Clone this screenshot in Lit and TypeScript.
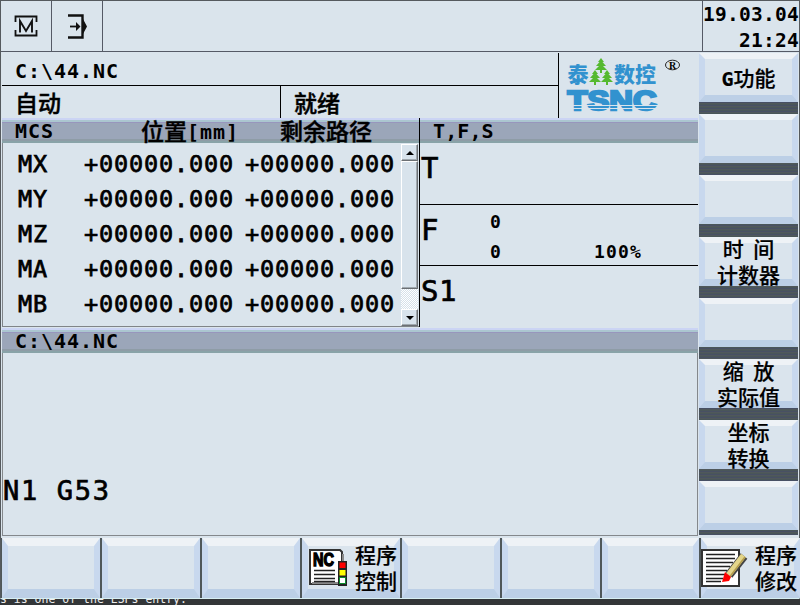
import { LitElement, html, css, svg, nothing } from "lit";
import { customElement, property } from "lit/decorators.js";

@customElement("soft-key")
class SoftKey extends LitElement {
  @property({ type: Array }) lines: string[] = [];
  @property() icon = "";

  static styles = css`
    :host {
      display: flex;
      align-items: center;
      justify-content: center;
      box-sizing: border-box;
      min-height: 0;
      background: #dae4ed;
      border-style: solid;
      border-width: 6px 6px 7px 6px;
      border-color: #eef2f6 #c8d8ee #bccfe6 #c8d8ee;
      color: #000;
      overflow: visible;
    }
    .icon { flex: none; display: block; margin-right: 7px; margin-top: 1px; }
    .label {
      flex: none;
      display: flex;
      flex-direction: column;
      text-align: center;
      white-space: pre;
      font: 500 21px/26px "Noto Sans CJK SC", sans-serif;
      -webkit-text-stroke: 0.2px #000;
    }
    :host(.bottom) { border-width: 8px 6px 9px 6px; justify-content: flex-end; }
    :host(.bottom) .label { margin: -2px -3px 0 0; }
    .latin { font-family: "DejaVu Sans Mono", monospace; font-weight: 700; font-size: 20px; }
    .single { margin-top: 1px; }
  `;

  private picture() {
    if (this.icon === "nc")
      return html`<svg class="icon" width="39" height="38" viewBox="0 0 39 38">
        <path d="M1 1H31L33 3V35H1Z" fill="#fff" stroke="#333" stroke-width="2" />
        <path d="M3 34H34M34 5V12" stroke="#888" stroke-width="2" />
        <text x="4" y="17" font-family="Liberation Sans" font-weight="700" font-size="18" stroke="#000" stroke-width="1.4" textLength="21" lengthAdjust="spacingAndGlyphs">NC</text>
        <path d="M5 21.5H26M5 25.5H26M5 29.5H26M5 32.5H26" stroke="#222" stroke-width="1.4" />
        <rect x="29" y="12" width="9" height="25" fill="#222" />
        <rect x="30.500" y="13.500" width="6" height="5.500" fill="#f00" />
        <rect x="30.500" y="21" width="6" height="5.500" fill="#ff0" />
        <rect x="30.500" y="28.500" width="6" height="6" fill="#fff" stroke="#0a8a2a" />
      </svg>`;
    if (this.icon === "edit")
      return html`<svg class="icon" width="47" height="40" viewBox="0 0 47 40">
        <path d="M1 2H38V38H1Z" fill="#fff" stroke="#333" stroke-width="2" />
        <path d="M5 6.500H34M5 10.500H34M5 14.500H32M5 18.500H29M5 22.500H26M5 26.500H24M5 30.500H22M5 33.500H20" stroke="#222" stroke-width="1.500" />
        <path d="M28 27L43 8" stroke="#444" stroke-width="8.500" />
        <path d="M27.500 27L42.500 7.500" stroke="#e3d58a" stroke-width="6" />
        <path d="M29 28.500L44 9" stroke="#b39c4c" stroke-width="1.500" />
        <path d="M24 24L30 29L28 33L21 34Z" fill="#f00" />
      </svg>`;
    return nothing;
  }

  render() {
    return html`${this.picture()}<div class="label ${this.lines.length === 1 ? "single" : ""}">${this.lines.map((l) =>
      l.startsWith("G")
        ? html`<span><span class="latin">G</span>${l.slice(1)}</span>`
        : html`<span>${l}</span>`
    )}</div>`;
  }
}

@customElement("app-root")
class AppRoot extends LitElement {
  static styles = css`
    :host {
      display: block;
      width: 800px;
      height: 605px;
      overflow: hidden;
      background: #333638;
      color: #000;
      font-family: "DejaVu Sans Mono", "Noto Sans CJK SC", monospace;
      white-space: pre;
    }
    * { box-sizing: border-box; }
    .panel {
      height: 599px;
      background: #dae4ec;
      border: 1px solid #555a5e;
      border-bottom: 1px solid #d7eef2;
      display: flex;
      flex-direction: column;
    }
    .top { height: 51px; display: flex; border-bottom: 1px solid #555a66; flex: none; }
    .cell { width: 51px; border-right: 1px solid #555a66; display: grid; place-items: center; }
    .grow { flex: 1; border-right: 1px solid #555a66; }
    .clock { width: 96px; padding-top: 1px; font: 700 19.5px/26px "DejaVu Sans Mono", monospace; letter-spacing: 0.26px; text-align: right; }
    .middle { flex: none; height: 484px; display: flex; padding-top: 1px; }
    .work { width: 698px; padding-left: 1px; display: flex; flex-direction: column; }
    .status { height: 65px; display: flex; flex: none; width: 696px; }
    .info { width: 557px; border-right: 1px solid #000; }
    .path { height: 33px; border-bottom: 1px solid #000; padding-left: 13px; line-height: 36px; }
    .modes { height: 32px; display: flex; }
    .mode { width: 279px; border-right: 1px solid #000; padding-left: 13px; }
    .ready { padding-left: 13px; }
    .b { font-size: 20px; font-weight: 700; letter-spacing: 0.96px; }
    .cn { font: 500 23px/32px "Noto Sans CJK SC", sans-serif; letter-spacing: 0; -webkit-text-stroke: 0.45px #000; }
    .bar {
      height: 25px;
      flex: none;
      width: 696px;
      background: linear-gradient(#cbd4f4 0 2px, #abc6d0 2px 4px, #9896bd 4px 5px, #9ba6b9 5px 21px, #8e9ca6 21px 23px, #89a3a8 23px);
      display: flex;
      line-height: 27px;
    }
    .bar .cn { line-height: 25px; font-size: 23px; }
    .axes-head { width: 417px; padding-left: 13px; display: flex; }
    .axes-head .mcs { width: 126px; }
    .axes-head .pos { width: 139px; display: flex; }
    .axes-head .unit { line-height: 28px; }
    .tfs-head { border-left: 1px solid #000; padding-left: 13px; letter-spacing: 0.1px; }
    .data { height: 184px; display: flex; width: 696px; flex: none; }
    .axes { width: 417px; border-left: 1px solid #808488; border-bottom: 1px solid #808488; display: flex; }
    .rows { width: 398px; padding: 3px 0 0 15px; }
    .row { height: 35px; line-height: 36px; display: flex; font-size: 23.5px; letter-spacing: 0.85px; -webkit-text-stroke: 0.75px #000; }
    .name { width: 66px; }
    .val { width: 161px; }
    .scroll { width: 17px; height: 182px; margin-top: 1px; display: flex; flex-direction: column; background: repeating-conic-gradient(#fff 0 25%, #d5e1ea 0 50%) 0 0 / 2px 2px; }
    .raised { background: #d8e3ec; border: 1px solid; border-color: #fff #6c7074 #6c7074 #fff; box-shadow: inset -1px -1px #a0a8ae; display: grid; place-items: center; }
    .arrow { height: 17px; }
    .thumb { height: 128px; }
    .gap { flex: 1; }
    .tfs { flex: 1; border-left: 1px solid #000; }
    .t { height: 62px; border-bottom: 1px solid #000; display: flex; }
    .f { height: 61px; }
    .s { height: 60px; border: 0; }
    .sym { font-size: 29px; line-height: 51px; letter-spacing: 0.5px; padding-left: 1px; width: 70px; -webkit-text-stroke: 0.7px #000; }
    .feed { width: 104px; }
    .small { font: 700 18px/30px "DejaVu Sans Mono", monospace; letter-spacing: 1.2px; padding-top: 2px; }
    .override { padding-top: 32px; }
    .space { height: 1px; flex: none; }
    .program { flex: 1; width: 696px; border: 1px solid #84888c; border-top: 0; display: flex; align-items: flex-end; padding-bottom: 27px; font-size: 27px; line-height: 34px; letter-spacing: 1.7px; -webkit-text-stroke: 0.7px #000; }
    .keys { width: 99px; height: 482px; overflow: hidden; background: repeating-linear-gradient(#4a5659 0 1px, #485064 1px 2px, #50585b 2px 3px); display: grid; grid-auto-rows: 49px; row-gap: 12.2px; align-content: start; }
    .bottom-keys { flex: none; height: 60px; margin-top: 2px; padding-left: 1px; display: grid; grid-template-rows: 60px; grid-template-columns: 98px 98px 98px 98px 98px 98px 97px 99px; column-gap: 2px; background: linear-gradient(90deg, #4f5759 0 797px, #dae4ec 797px); }
    .console { height: 6px; overflow: hidden; color: #eee; font-size: 11.5px; line-height: 12px; }
    .console div { margin-top: -6px; }
  `;

  private logo() {
    const tree = (x: number, y: number) => svg`<path transform="translate(${x} ${y})" fill="#55b92f"
      d="M6 0L9 4H7.500L11 8H8L12 12H7V15H5V12H0L4 8H1L4.500 4H3Z" />`;
    return html`<svg width="137" height="65" viewBox="559 53 137 65">
      <g fill="#3292cf" font-family="Noto Sans CJK SC" font-weight="900" font-size="21">
        <text x="567.500" y="81.500">泰</text>
        <text x="614" y="81.500" textLength="42">数控</text>
      </g>
      ${tree(595, 58)}${tree(589, 70)}${tree(601, 70)}
      <text x="567.500" y="109.500" font-family="Liberation Sans" font-weight="700" font-size="27" fill="#3292cf" stroke="#3292cf" stroke-width="2.300" textLength="89" lengthAdjust="spacingAndGlyphs">TSNC</text>
      <path d="M566 105.500H659M566 108.500H659" stroke="#dae4ec" stroke-width="1.200" />
      <ellipse cx="672.500" cy="65" rx="7" ry="4.800" fill="none" stroke="#222" stroke-width="1" />
      <text x="669" y="68.500" font-family="Liberation Serif" font-weight="700" font-size="10">R</text>
    </svg>`;
  }

  render() {
    const side = [["G功能"], [], [], ["时  间", "计数器"], [], ["缩  放", "实际值"], ["坐标", "转换"], []];
    const bottom: [string, string[]][] = [["", []], ["", []], ["", []], ["nc", ["程序", "控制"]], ["", []], ["", []], ["", []], ["edit", ["程序", "修改"]]];
    return html`<div class="panel"><div class="top"><div class="cell"><svg width="24" height="22" viewBox="0 0 24 22" fill="none" stroke="#111">
      <path d="M1.500 7V1.500H22.500V7M1.500 15V20.500H22.500V15" stroke-width="1.800" /><path d="M6 17.500V6L12 16L18 6V17.500" stroke-width="1.900" /></svg></div><div class="cell"><svg width="20" height="25" viewBox="0 0 20 25" fill="none" stroke="#111">
      <path d="M1 1.500H15.500V23.500H1" stroke-width="2.400" /><path d="M3 12.500H11" stroke-width="1.800" /><path d="M9 8L13.500 12.500L9 17ZM16 5L20 12.500L16 20Z" fill="#111" stroke="none" /></svg></div><div class="grow"></div><div class="clock"><div>19.03.04</div><div>21:24</div></div></div><div class="middle"><div class="work"><div class="status"><div class="info"><div class="path b">C:\\44.NC</div><div class="modes"><div class="mode cn">自动</div><div class="ready cn">就绪</div></div></div>${this.logo()}</div><div class="bar"><div class="axes-head"><span class="mcs b">MCS</span><span class="pos"><span class="cn">位置</span><span class="b unit">[mm]</span></span><span class="cn">剩余路径</span></div><div class="tfs-head b">T,F,S</div></div><div class="data"><div class="axes"><div class="rows">${["MX", "MY", "MZ", "MA", "MB"].map(
      (n) => html`<div class="row"><span class="name">${n}</span><span class="val">+00000.000</span><span>+00000.000</span></div>`
    )}</div><div class="scroll"><div class="raised arrow"><svg width="8" height="4"><path d="M0 4L4 0L8 4Z" /></svg></div><div class="raised thumb"></div><div class="gap"></div><div class="raised arrow"><svg width="8" height="4"><path d="M0 0L4 4L8 0Z" /></svg></div></div></div><div class="tfs"><div class="t"><span class="sym">T</span></div><div class="t f"><span class="sym">F</span><div class="feed small"><div>0</div><div>0</div></div><div class="small override">100%</div></div><div class="t s"><span class="sym">S1</span></div></div></div><div class="space"></div><div class="bar b"><div class="axes-head">C:\\44.NC</div></div><div class="program">N1 G53</div></div><div class="keys">${side.map((l) => html`<soft-key class="side" .lines=${l}></soft-key>`)}</div></div><div class="bottom-keys">${bottom.map(
      ([i, l]) => html`<soft-key class="bottom" .icon=${i} .lines=${l}></soft-key>`
    )}</div></div><div class="console"><div>s is one of the ESPs entry.</div></div>`;
  }
}
